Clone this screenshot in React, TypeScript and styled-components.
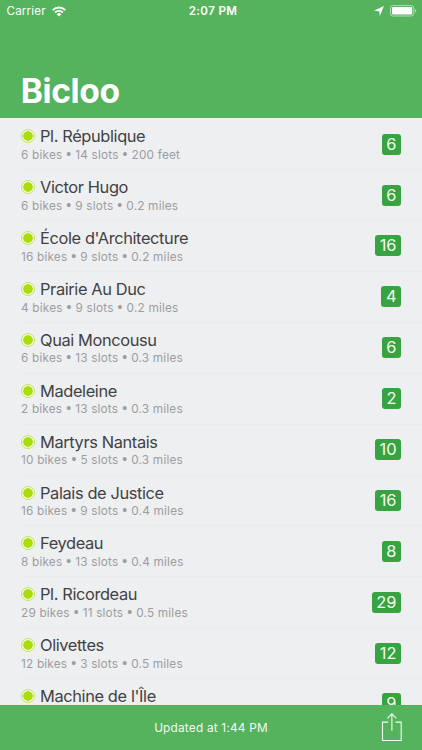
import React from "react";
import styled, { createGlobalStyle } from "styled-components";

const GlobalStyle = createGlobalStyle`
  * { box-sizing: border-box; }
  body { margin: 0; overflow: hidden; }
`;

const Screen = styled.main`
  width: 422px;
  height: 750px;
  display: flex;
  flex-direction: column;
  overflow: hidden;
  background: #eeeff1;
  font-family: Inter, "Liberation Sans", sans-serif;
`;

const Header = styled.header`
  flex: 0 0 118.4px;
  background: #55b25d;
  color: #fff;
`;

const StatusBar = styled.div`
  height: 22px;
  padding: 0 5px 0 6.6px;
  display: grid;
  grid-template-columns: 1fr auto 1fr;
  align-items: center;
  font-size: 11.6px;
  line-height: 22px;
`;

const StatusGroup = styled.div<{ $end?: boolean }>`
  display: flex;
  align-items: center;
  justify-content: ${(p) => (p.$end ? "flex-end" : "flex-start")};
  gap: 6px;
  letter-spacing: 0.15px;
`;

const Clock = styled.div`
  font-weight: 600;
  letter-spacing: 0.38px;
  padding-left: 2.5px;
`;

const Title = styled.h1`
  margin: 48px 0 0 20.8px;
  font-size: 33.6px;
  line-height: 42px;
  font-weight: 700;
  letter-spacing: -0.42px;
`;

const List = styled.ul`
  flex: 1;
  min-height: 0;
  margin: 0;
  padding: 0.9px 0 0;
  list-style: none;
  overflow: hidden;
`;

const Row = styled.li`
  height: 50.9px;
  padding: 7px 21px 0 21px;
  display: flex;
  justify-content: space-between;
  background: linear-gradient(#e9eaec, #e9eaec) 21px 100% / 401px 1px no-repeat;
`;

const NameLine = styled.div`
  display: flex;
  align-items: center;
  gap: 5px;
  height: 21px;
`;

const Name = styled.span`
  color: #414244;
  font-size: 16.4px;
  line-height: 21px;
  letter-spacing: -0.38px;
  white-space: nowrap;
`;

const Dot = styled.span`
  width: 14px;
  height: 14px;
  margin-bottom: 1px;
  border: 1px solid #c3e65c;
  border-radius: 50%;
  background: radial-gradient(circle, #a9dc08 4.4px, #f2f6e4 5.1px);
`;

const Detail = styled.div`
  margin-top: -0.4px;
  color: #9c9da0;
  font-size: 11.8px;
  line-height: 15px;
  letter-spacing: 0.19px;
  white-space: nowrap;
`;

const Bullet = styled.span`
  margin: 0 0.4px;
  font-family: "Liberation Sans", sans-serif;
  font-size: 14px;
  line-height: 1;
`;

const Badge = styled.span`
  height: 21px;
  margin-top: 7.4px;
  padding: 0 4.5px;
  border-radius: 3px;
  background: #38a341;
  color: #f4fbf4;
  font-size: 16.4px;
  line-height: 21.6px;
`;

const Toolbar = styled.footer`
  flex: 0 0 45px;
  padding: 0 20px;
  display: grid;
  grid-template-columns: 1fr auto 1fr;
  align-items: center;
  background: #55b25d;
  color: #f3faf3;
  font-size: 11.8px;
  letter-spacing: 0.22px;
`;

const Updated = styled.span`
  grid-column: 2;
`;

const ShareButton = styled.button`
  justify-self: end;
  display: flex;
  padding: 0 0 1px;
  border: 0;
  background: none;
  color: inherit;
`;

const stations = [
  { name: "Pl. République", bikes: 6, slots: 14, distance: "200 feet" },
  { name: "Victor Hugo", bikes: 6, slots: 9, distance: "0.2 miles" },
  { name: "École d'Architecture", bikes: 16, slots: 9, distance: "0.2 miles" },
  { name: "Prairie Au Duc", bikes: 4, slots: 9, distance: "0.2 miles" },
  { name: "Quai Moncousu", bikes: 6, slots: 13, distance: "0.3 miles" },
  { name: "Madeleine", bikes: 2, slots: 13, distance: "0.3 miles" },
  { name: "Martyrs Nantais", bikes: 10, slots: 5, distance: "0.3 miles" },
  { name: "Palais de Justice", bikes: 16, slots: 9, distance: "0.4 miles" },
  { name: "Feydeau", bikes: 8, slots: 13, distance: "0.4 miles" },
  { name: "Pl. Ricordeau", bikes: 29, slots: 11, distance: "0.5 miles" },
  { name: "Olivettes", bikes: 12, slots: 3, distance: "0.5 miles" },
  { name: "Machine de l'Île", bikes: 9 },
];

const WifiIcon = () => (
  <svg width="14" height="11" viewBox="0 0 14 11" fill="none" stroke="#fff" strokeWidth="1.9">
    <path d="M.7 4.1a8.9 8.9 0 0 1 12.6 0" />
    <path d="M3.1 6.5a5.5 5.5 0 0 1 7.8 0" />
    <path d="M7 10.6 4.7 8.2a3.3 3.3 0 0 1 4.6 0Z" fill="#fff" stroke="none" />
  </svg>
);

const LocationIcon = () => (
  <svg width="10" height="10" viewBox="0 0 10 10" fill="#fff">
    <path d="M9.9 0 5.8 9.9 5.2 5.3 0 4.7Z" />
  </svg>
);

const BatteryIcon = () => (
  <svg width="27" height="12" viewBox="0 0 27 12">
    <rect x=".5" y=".6" width="23.2" height="10.4" rx="2.3" fill="none" stroke="#fff" strokeOpacity=".55" />
    <rect x="2" y="2.1" width="20.2" height="7.4" rx="1" fill="#fff" />
    <path d="M24.9 4v3.7q1.4-.5 1.4-1.85T24.9 4Z" fill="#fff" fillOpacity=".55" />
  </svg>
);

const ShareIcon = () => (
  <svg width="22" height="30" viewBox="0 0 22 30" fill="none" stroke="currentColor" strokeWidth="1.1">
    <path d="M8.3 10.1H2.5v18.4h18.7V10.1h-5.7M11.9 18.7V1.8M7.4 6.3l4.5-4.5 4.5 4.5" />
  </svg>
);

export default function App() {
  return (
    <Screen>
      <GlobalStyle />
      <Header>
        <StatusBar>
          <StatusGroup>
            Carrier
            <WifiIcon />
          </StatusGroup>
          <Clock>2:07 PM</Clock>
          <StatusGroup $end>
            <LocationIcon />
            <BatteryIcon />
          </StatusGroup>
        </StatusBar>
        <Title>Bicloo</Title>
      </Header>
      <List>
        {stations.map((s) => (
          <Row key={s.name}>
            <div>
              <NameLine>
                <Dot />
                <Name>{s.name}</Name>
              </NameLine>
              {s.distance && (
                <Detail>
                  {s.bikes} bikes <Bullet>•</Bullet> {s.slots} slots <Bullet>•</Bullet> {s.distance}
                </Detail>
              )}
            </div>
            <Badge>{s.bikes}</Badge>
          </Row>
        ))}
      </List>
      <Toolbar>
        <Updated>Updated at 1:44 PM</Updated>
        <ShareButton aria-label="Share">
          <ShareIcon />
        </ShareButton>
      </Toolbar>
    </Screen>
  );
}
